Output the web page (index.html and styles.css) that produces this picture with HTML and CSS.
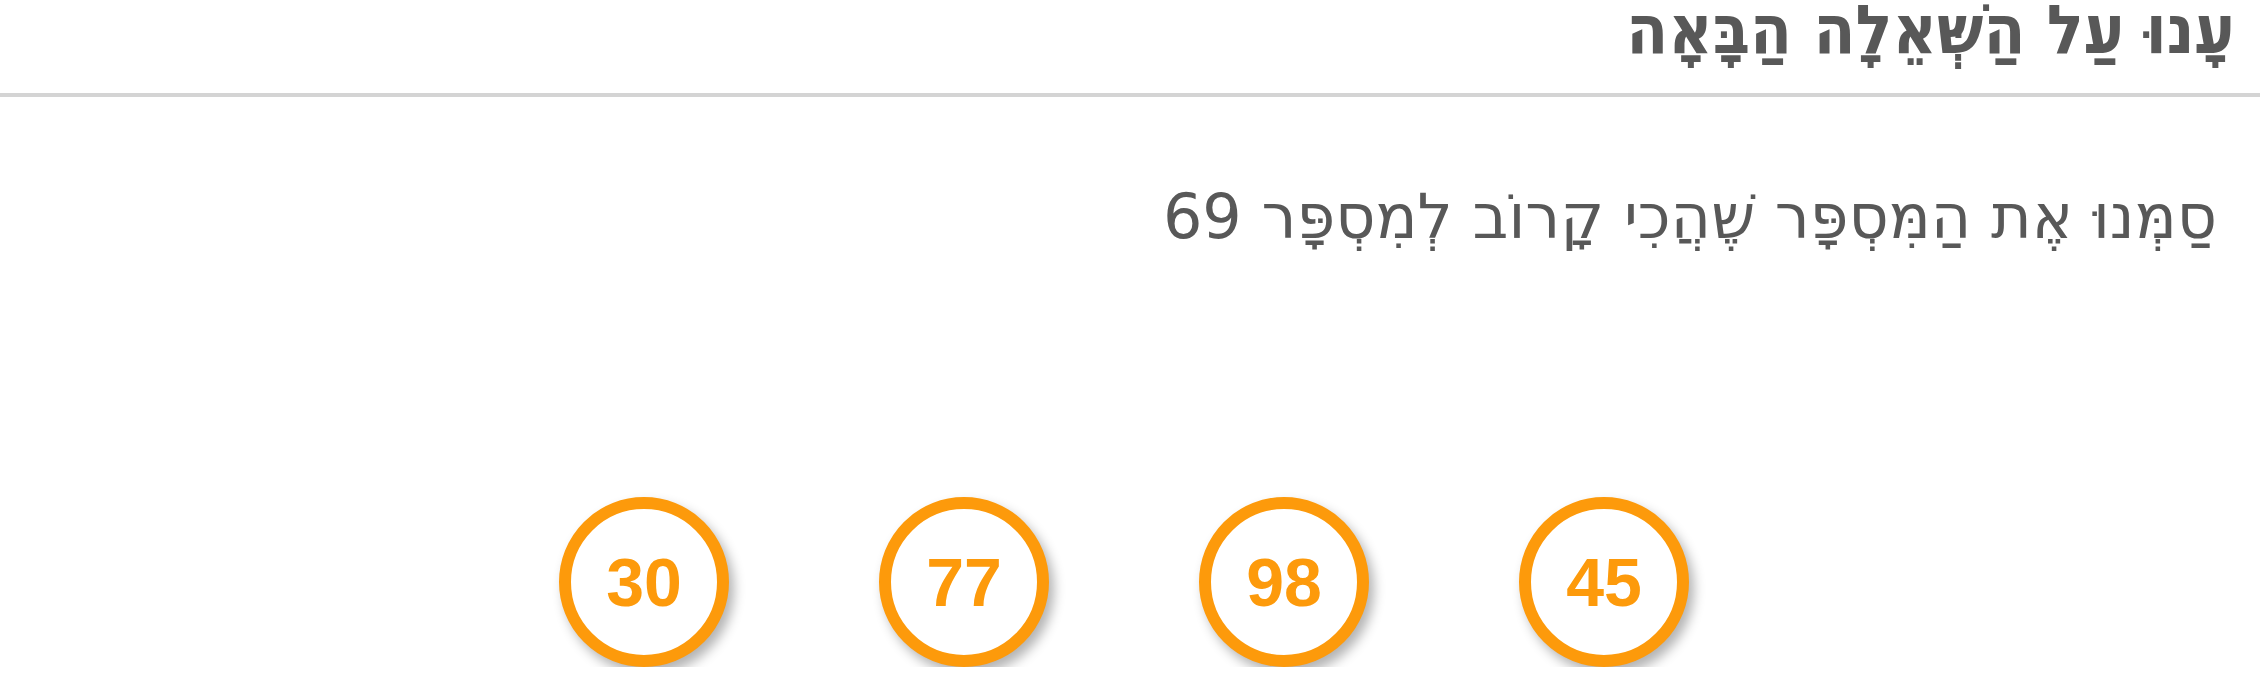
FILE: index.html
```html
<!DOCTYPE html>
<html lang="he" dir="rtl">
<head>
    <meta charset="UTF-8">
    <meta name="viewport" content="width=device-width, initial-scale=1.0">
    <title>שאלה</title>
    <link rel="stylesheet" href="styles.css">
</head>
<body>
    <header class="top-bar">
        <h1>עָנוּ עַל הַשְּׁאֵלָה הַבָּאָה</h1>
    </header>

    <main class="question">
        <p class="question-text">סַמְּנוּ אֶת הַמִּסְפָּר שֶׁהֲכִי קָרוֹב לְמִסְפָּר 69</p>

        <div class="answers">
            <button class="answer">45</button>
            <button class="answer">98</button>
            <button class="answer">77</button>
            <button class="answer">30</button>
        </div>
    </main>
</body>
</html>
```

FILE: styles.css
```css
body {
    margin: 0;
    background: #fff;
    font-family: "DejaVu Sans", sans-serif;
    color: #585858;
}

.top-bar {
    height: 93px;
    border-bottom: 4px solid #d4d4d4;
    padding: 0 25px;
}

.top-bar h1 {
    margin: 0;
    font-family: "DejaVu Sans Condensed", "DejaVu Sans", sans-serif;
    font-size: 68px;
    line-height: 60px;
    font-weight: bold;
}

.question {
    padding: 0 43px;
}

.question-text {
    margin: 80px 0 0 0;
    font-size: 62px;
    line-height: 80px;
}

.answers {
    display: flex;
    justify-content: center;
    gap: 150px;
    margin-top: 240px;
    padding-right: 12px;
}

.answer {
    width: 170px;
    height: 170px;
    border: 12px solid #fd9a0b;
    border-radius: 50%;
    background: #fff;
    box-shadow: 5px 7px 12px rgba(0, 0, 0, 0.3);
    font-family: "Liberation Sans", Arial, sans-serif;
    font-size: 68px;
    font-weight: bold;
    color: #fd9a0b;
    padding: 0;
    cursor: pointer;
}
```
